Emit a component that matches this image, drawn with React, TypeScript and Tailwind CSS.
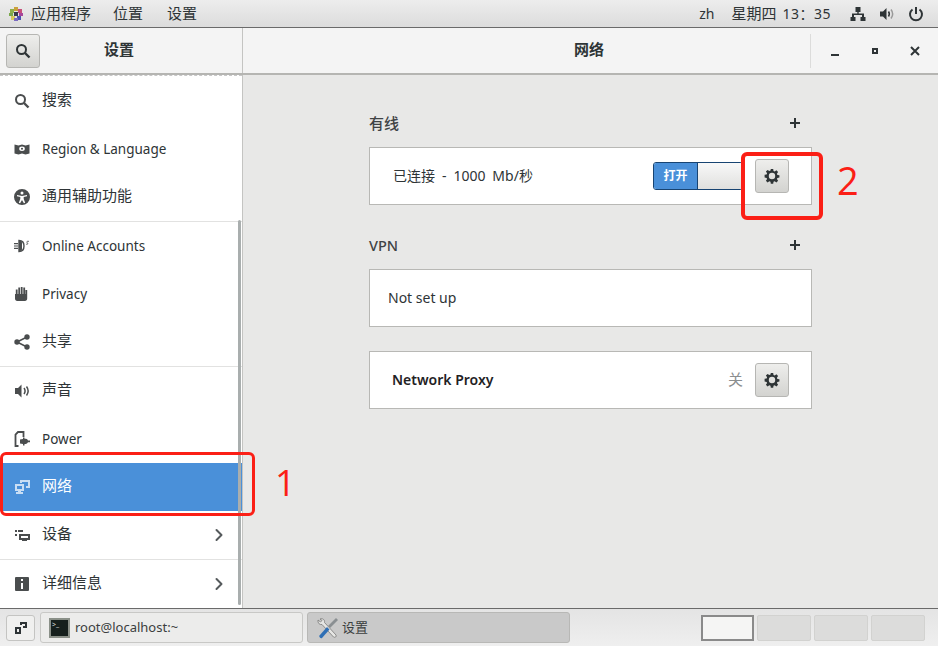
import React from 'react';
import { ChevronRight } from 'lucide-react';

const FONT = "font-['Noto_Sans','Noto_Sans_CJK_SC',sans-serif]";

const SearchIcon = ({ className = '' }: { className?: string }) => (
  <svg width="16" height="16" viewBox="0 0 16 16" className={className} fill="none">
    <circle cx="6.5" cy="6.5" r="4.5" stroke="currentColor" strokeWidth="2" />
    <path d="M10 10l4.5 4.5" stroke="currentColor" strokeWidth="2.4" />
  </svg>
);

const GearIcon = () => (
  <svg width="16" height="16" viewBox="0 0 16 16" className="text-[#2e3436]">
    <path
      fill="currentColor"
      fillRule="evenodd"
      d="M6.8 1h2.4l.3 2 1.2.5 1.700-1.200 1.700 1.700-1.200 1.700.5 1.200 2 .3v2.400l-2 .3-.5 1.200 1.200 1.700-1.700 1.700-1.700-1.200-1.200.5-.3 2H6.800l-.3-2-1.200-.5-1.700 1.200-1.700-1.700 1.200-1.700-.5-1.200-2-.3V6.800l2-.3.5-1.200-1.200-1.700 1.700-1.700 1.700 1.200 1.200-.5zM8 4.800a3.200 3.200 0 1 0 0 6.400 3.200 3.200 0 0 0 0-6.400z"
    />
  </svg>
);

const PlusIcon = () => (
  <svg width="12" height="12" viewBox="0 0 12 12" className="text-[#2e3436]">
    <path d="M5 1h2v4h4v2H7v4H5V7H1V5h4z" fill="currentColor" />
  </svg>
);

const Logo = () => (
  <svg width="16" height="16" viewBox="0 0 16 16">
    <rect x="6" y="1" width="4" height="4" fill="#c9a13b" />
    <rect x="2" y="3" width="4" height="4" fill="#8fb04a" />
    <rect x="10" y="3" width="4" height="4" fill="#c8507a" />
    <rect x="1" y="7" width="4" height="3" fill="#7aa84a" />
    <rect x="6" y="6" width="4" height="4" fill="#3a3a4a" />
    <rect x="11" y="7" width="4" height="3" fill="#a8469a" />
    <rect x="3" y="10" width="4" height="4" fill="#d8c85a" />
    <rect x="9" y="10" width="4" height="4" fill="#4a52b0" />
    <rect x="6" y="12" width="4" height="3" fill="#7a6ac0" />
  </svg>
);

const sidebarIcons: Record<string, React.ReactNode> = {
  search: <SearchIcon />,
  region: (
    <svg width="16" height="16" viewBox="0 0 16 16">
      <path fill="currentColor" fillRule="evenodd" d="M0.500 3.500l4 1 3.500-1 3.500 1 4-1v9l-4 1-3.500-1-3.500 1-4-1zM8 5.500a2.500 2 0 1 0 0 4.500 2.500 2 0 0 0 0-4.500zm0 1.300a1 .9 0 1 1 0 1.900 1 .9 0 0 1 0-1.900z" />
    </svg>
  ),
  access: (
    <svg width="16" height="16" viewBox="0 0 16 16">
      <path fill="currentColor" fillRule="evenodd" d="M8 0a8 8 0 1 1 0 16A8 8 0 0 1 8 0zM8 2.500a1.500 1.500 0 1 0 0 3 1.500 1.500 0 0 0 0-3zM3 6v1.300l3.300.8V10l-1.500 3.700 1.300.5L8 11l1.900 3.200 1.300-.5L9.700 10V8.100l3.300-.8V6L8 7z" />
    </svg>
  ),
  online: (
    <svg width="16" height="16" viewBox="0 0 16 16">
      <path fill="none" stroke="currentColor" strokeWidth="1.400" d="M5 2.500c3 0 5 2.200 5 5.500s-2 5.500-5 5.500z" />
      <path fill="currentColor" d="M5 2.500c1.500.2 2.500.8 3 2v7c-.5 1.200-1.500 1.800-3 2zM0 5h4v1.200H0zM0 7.400h4v1.200H0zM0 9.800h4V11H0z" />
      <path fill="none" stroke="currentColor" strokeWidth="0.900" d="M15 3.500c-1.600-.7-2.700.2-1.800 1.200s.8 2-1 1.500" />
    </svg>
  ),
  privacy: (
    <svg width="16" height="16" viewBox="0 0 16 16">
      <path fill="currentColor" d="M1 8h.8V3.500h1.800V8h.7V1.500h1.800V8h.7V1h1.800v7h.7V1.500h1.800V8h.3V4h1.800v8.500c0 1.500-.8 2.500-2.300 2.500H3.300C1.800 15 1 14 1 12.500z" />
    </svg>
  ),
  share: (
    <svg width="16" height="16" viewBox="0 0 16 16">
      <circle cx="3" cy="8" r="2.700" fill="currentColor" />
      <circle cx="13" cy="3" r="2.700" fill="currentColor" />
      <circle cx="13" cy="13" r="2.700" fill="currentColor" />
      <path d="M3 8l10-5M3 8l10 5" stroke="currentColor" strokeWidth="1.500" />
    </svg>
  ),
  sound: (
    <svg width="16" height="16" viewBox="0 0 16 16">
      <path fill="currentColor" d="M1 5h3l3.500-3.500v13L4 11H1z" />
      <path fill="none" stroke="currentColor" strokeWidth="1.500" d="M10 5c1.300 1.800 1.300 4.200 0 6M12.500 3.500c2 2.700 2 6.300 0 9" />
    </svg>
  ),
  power: (
    <svg width="16" height="16" viewBox="0 0 16 16">
      <path fill="none" stroke="currentColor" strokeWidth="1.800" d="M4.500 15H1.500V3.500L4 1h5.500v5" />
      <path fill="currentColor" d="M6 8.500l3-.5V6.500h1.500v1.300h1.500a3 3 0 0 1 2 1.700H16v1.800h-2a3 3 0 0 1-2 1.700h-1.500v1.500H9V13l-3-.5z" />
    </svg>
  ),
  network: (
    <svg width="16" height="16" viewBox="0 0 16 16">
      <path fill="currentColor" opacity="0.7" d="M6 1h10v8h-4V7h2V3H8v1H6zM1 5h9v7H7v1h2v2H2v-2h2v-1H1zm2 2v3h5V7z" />
    </svg>
  ),
  device: (
    <svg width="16" height="16" viewBox="0 0 16 16">
      <path fill="currentColor" fillRule="evenodd" d="M1 3h2v2H1zM4 3h5v2H4zM1 7h2v2H1zM5 7h11v6h-3v1H8v-1H5zM7 9v2h7V9z" />
    </svg>
  ),
  info: (
    <svg width="16" height="16" viewBox="0 0 16 16">
      <path fill="currentColor" fillRule="evenodd" d="M2 1h12a1 1 0 0 1 1 1v12a1 1 0 0 1-1 1H2a1 1 0 0 1-1-1V2a1 1 0 0 1 1-1zM7 3v2h2V3zM7 7v6h2V7z" />
    </svg>
  ),
};

interface RowProps {
  icon: string;
  label: string;
  active?: boolean;
  arrow?: boolean;
  latin?: boolean;
}

const SidebarRow = ({ icon, label, active, arrow, latin }: RowProps) => (
  <div
    className={`flex h-12 items-center pl-[14px] pr-[13px] ${
      active ? 'bg-[#4a90d9] text-white' : 'text-[#2e3436]'
    }`}
  >
    <span className={`flex w-[28px] shrink-0 ${active ? 'text-white' : 'text-[#4a4d4e]'}`}>
      {sidebarIcons[icon]}
    </span>
    <span className={`flex-1 ${latin ? 'text-[13.5px]' : 'pb-[3px] text-[15px]'}`}>{label}</span>
    {arrow && <ChevronRight size={20} strokeWidth={2.4} className="text-[#555a5c]" />}
  </div>
);

const Sep = () => <div className="h-px bg-[#e2e2e1]" />;

const HeadButton = ({ children }: { children: React.ReactNode }) => (
  <div className="flex h-[34px] w-[34px] shrink-0 items-center justify-center rounded-[3px] border border-[#b6b6b3] bg-gradient-to-b from-[#eeeeec] to-[#d3d3d0]">
    {children}
  </div>
);

export default function App() {
  return (
    <div className={`relative flex h-[646px] w-[938px] flex-col overflow-hidden bg-[#e8e8e7] ${FONT}`}>
      {/* top panel */}
      <div className="flex h-[28px] shrink-0 items-center border-b border-[#6a6a6a] bg-gradient-to-b from-[#ededed] to-[#dcdcdc] pl-[8px] pr-[14px] text-[15px] text-[#2e3436]">
        <Logo />
        <span className="ml-[7px]">应用程序</span>
        <span className="ml-[22px]">位置</span>
        <span className="ml-[24px]">设置</span>
        <span className="ml-auto text-[14px]">zh</span>
        <span className="ml-[17px]">星期四</span>
        <span className="ml-[6px] text-[14px] tracking-[0.5px]">13：35</span>
        <svg width="16" height="16" viewBox="0 0 16 16" className="ml-[19px]">
          <path fill="#2e3436" d="M5.500 1h5v5h-1.800v1.500H14V11h1.500v4h-5v-4H12V9H4v2h1.500v4h-5v-4H2V7.500h5.300V6H5.500z" />
        </svg>
        <svg width="16" height="16" viewBox="0 0 16 16" className="ml-[13px]">
          <path fill="#2e3436" d="M1 5.500h3L7.500 2v12L4 10.500H1z" />
          <path fill="none" stroke="#2e3436" strokeWidth="1.500" d="M9.500 5.500c1 1.500 1 3.500 0 5" />
          <path fill="none" stroke="#9a9a9a" strokeWidth="1.500" d="M12 3.500c2 2.700 2 6.300 0 9" />
        </svg>
        <svg width="16" height="16" viewBox="0 0 16 16" className="ml-[13px]">
          <path fill="none" stroke="#2e3436" strokeWidth="2" d="M4.500 3.500a6 6 0 1 0 7 0M8 1v7" />
        </svg>
      </div>

      {/* window header */}
      <div className="flex h-[47px] shrink-0 border-b-2 border-[#b5b5b2] bg-[#f4f4f4]">
        <div className="flex w-[243px] shrink-0 items-center border-r border-[#c4c4c2] pl-[6px]">
          <HeadButton>
            <SearchIcon className="text-[#2e3436]" />
          </HeadButton>
          <span className="ml-[64px] pb-[2px] text-[15px] font-bold text-[#2e3436]">设置</span>
        </div>
        <div className="relative flex flex-1 items-center justify-center">
          <span className="pb-[2px] pr-[3px] text-[15px] font-bold text-[#2e3436]">网络</span>
          <div className="absolute right-0 top-[6px] flex h-[34px] items-center border-l border-[#dcdcdb] pl-[18px] pr-[17px] text-[#2e3436]">
            <svg width="12" height="12" viewBox="0 0 12 12">
              <path d="M2 9h8v2H2z" fill="currentColor" />
            </svg>
            <svg width="12" height="12" viewBox="0 0 12 12" className="ml-[28px]">
              <path d="M3 3h6v6H3zm2 2v2h2V5z" fill="currentColor" fillRule="evenodd" />
            </svg>
            <svg width="12" height="12" viewBox="0 0 12 12" className="ml-[28px]">
              <path d="M2 2l8 8M10 2l-8 8" stroke="currentColor" strokeWidth="2" />
            </svg>
          </div>
        </div>
      </div>

      <div className="flex min-h-0 flex-1">
        {/* sidebar */}
        <div className="relative w-[243px] shrink-0 border-r border-[#c4c4c2] bg-white">
          <div className="mb-px h-px border-t border-dashed border-[#c8c8c8]" />
          <SidebarRow icon="search" label="搜索" />
          <SidebarRow icon="region" label="Region & Language" latin />
          <SidebarRow icon="access" label="通用辅助功能" />
          <Sep />
          <SidebarRow icon="online" label="Online Accounts" latin />
          <SidebarRow icon="privacy" label="Privacy" latin />
          <SidebarRow icon="share" label="共享" />
          <Sep />
          <SidebarRow icon="sound" label="声音" />
          <SidebarRow icon="power" label="Power" latin />
          <SidebarRow icon="network" label="网络" active />
          <SidebarRow icon="device" label="设备" arrow />
          <Sep />
          <SidebarRow icon="info" label="详细信息" arrow />
          {/* scrollbar thumb */}
          <div className="absolute bottom-[3px] right-[1px] top-[145px] w-[3px] rounded-full bg-[#a9aeae]" />
        </div>

        {/* content */}
        <div className="min-w-0 flex-1 pt-[37px] text-[14px] text-[#2e3436]">
          <div className="mx-auto w-[443px]">
            <div className="flex h-[22px] items-center justify-between pr-[11px]">
              <span className="text-[15px] font-medium text-[#3f4345]">有线</span>
              <PlusIcon />
            </div>
            <div className="mt-[13px] flex h-[58px] items-center border border-[#b8b8b5] bg-white pl-[23px] pr-[22px]">
              <span className="pb-[2px] text-[14px] [word-spacing:3.3px]">已连接 - 1000 Mb/秒</span>
              <div className="ml-auto flex h-[28px] w-[90px] overflow-hidden rounded-[3px] border border-[#184472]">
                <div className="flex w-[44px] items-center justify-center border-r border-[#184472] bg-[#4a90d9] text-[12px] font-bold text-white">
                  打开
                </div>
                <div className="flex-1 bg-gradient-to-b from-[#f8f8f8] to-[#e0e0de]" />
              </div>
              <div className="ml-[12px]">
                <HeadButton>
                  <GearIcon />
                </HeadButton>
              </div>
            </div>

            <div className="mt-[29px] flex h-[22px] items-center justify-between pr-[11px]">
              <span className="pt-[2px] text-[14.5px] font-medium text-[#3f4345]">VPN</span>
              <PlusIcon />
            </div>
            <div className="mt-[13px] flex h-[58px] items-center border border-[#b8b8b5] bg-white pb-[2px] pl-[18px]">
              Not set up
            </div>

            <div className="mt-[24px] flex h-[58px] items-center border border-[#b8b8b5] bg-white pl-[22px] pr-[22px]">
              <span className="pb-[2px] font-semibold text-[#1f2224]">Network Proxy</span>
              <span className="ml-auto pb-[2px] text-[15px] text-[#8b8e8f]">关</span>
              <div className="ml-[12px]">
                <HeadButton>
                  <GearIcon />
                </HeadButton>
              </div>
            </div>
          </div>
        </div>
      </div>

      {/* bottom panel */}
      <div className="flex h-[38px] shrink-0 items-center border-t border-[#6a6a6a] bg-gradient-to-b from-[#e4e4e4] to-[#efefef] pl-[6px] pr-[13px] text-[13px] text-[#3b3e40]">
        <div className="flex h-[26px] w-[29px] items-center justify-center rounded-[3px] border border-[#c4c4c2] bg-[#f0f0ef]">
          <svg width="14" height="14" viewBox="0 0 14 14">
            <path fill="#2e3436" fillRule="evenodd" d="M6 1h7v6H9v-2h2V3H8v1H6zM1 6h6v7H1zm2 2v3h2V8z" />
          </svg>
        </div>
        <div className="ml-[5px] flex h-[31px] w-[263px] items-center rounded-[3px] border border-[#c8c8c6] bg-[#ececeb] pl-[8px]">
          <div className="flex h-[20px] w-[21px] items-start border-2 border-[#8a9088] bg-[#16201d] pl-px text-[7px] leading-[9px] text-[#d4d8d4]">
            &gt;_
          </div>
          <span className="ml-[5px] text-[13px]">root@localhost:~</span>
        </div>
        <div className="ml-[4px] flex h-[31px] w-[263px] items-center rounded-[3px] border border-[#b8b8b6] bg-[#c9c9c9] pl-[8px]">
          <svg width="24" height="24" viewBox="0 0 24 24">
            <path d="M4 3c3-1 5 1 4.500 3.500L20 19c1 1.500-1 3-2.500 2L6 8.500C3.500 9 1.500 7 2 4l2.500 2L6 4.500z" fill="#e6e6e4" stroke="#7a7a78" strokeWidth="0.8" />
            <path d="M20 2l2 2-8 8-2-2z" fill="#8a8f92" />
            <path d="M11 11l2.500 2.500L6 22c-1 1-3.500-1-2.500-2.500z" fill="#2f6fb5" />
          </svg>
          <span className="ml-[2px]">设置</span>
        </div>
        <div className="ml-auto flex gap-[3px]">
          <div className="h-[26px] w-[53px] border-2 border-[#8a8a8a] bg-[#f5f5f4]" />
          <div className="h-[26px] w-[54px] rounded-[2px] border border-[#d2d2d0] bg-[#dcdcdb]" />
          <div className="h-[26px] w-[54px] rounded-[2px] border border-[#d2d2d0] bg-[#dcdcdb]" />
          <div className="h-[26px] w-[54px] rounded-[2px] border border-[#d2d2d0] bg-[#dcdcdb]" />
        </div>
      </div>

      {/* red annotations drawn over the screenshot */}
      <div className="absolute left-0 top-[452px] h-[64px] w-[255px] rounded-[6px] border-[3px] border-[#fb1f16]" />
      <span className="absolute left-[275px] top-[461px] font-['Open_Sans',sans-serif] text-[36px] leading-[44px] text-[#fb1f16]">1</span>
      <div className="absolute left-[741px] top-[152px] h-[68px] w-[82px] rounded-[6px] border-[4px] border-[#fb1f16]" />
      <span className="absolute left-[837px] top-[158px] font-['Open_Sans',sans-serif] text-[38px] leading-[44px] text-[#fb1f16]">2</span>
    </div>
  );
}
